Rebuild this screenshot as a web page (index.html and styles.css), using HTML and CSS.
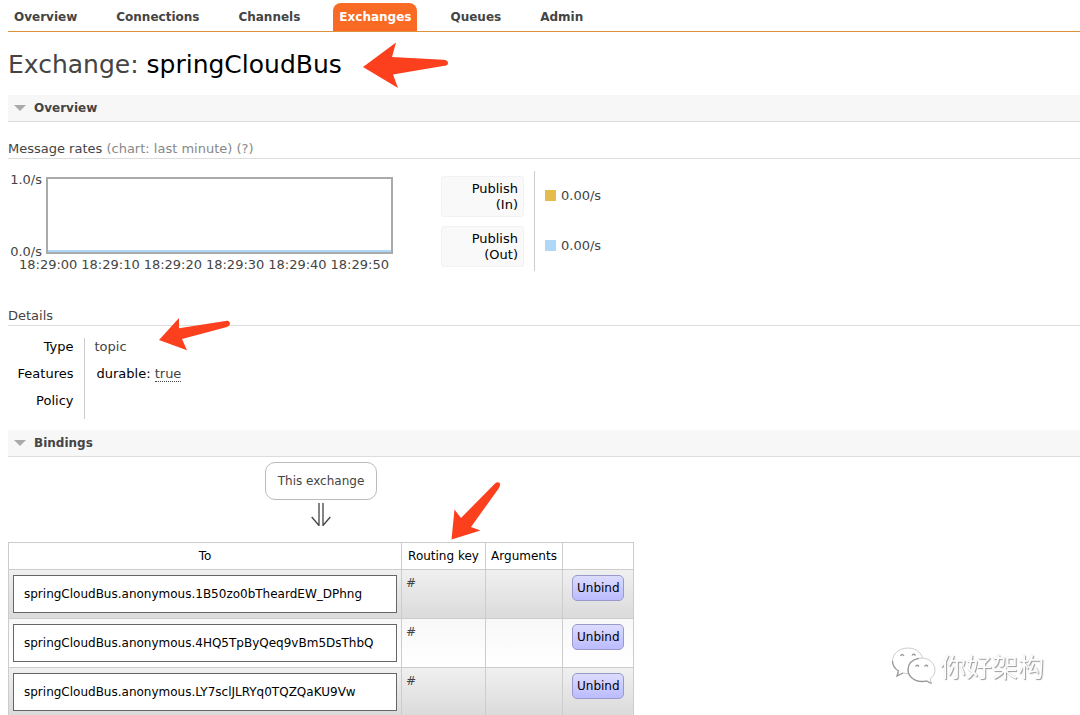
FILE: index.html
```html
<!DOCTYPE html>
<html lang="en">
<head>
<meta charset="utf-8">
<title>Exchange: springCloudBus</title>
<link rel="stylesheet" href="styles.css">
</head>
<body>
<nav class="tabs">
  <a class="tab" href="#overview">Overview</a>
  <a class="tab" href="#connections">Connections</a>
  <a class="tab" href="#channels">Channels</a>
  <a class="tab selected" href="#exchanges">Exchanges</a>
  <a class="tab" href="#queues">Queues</a>
  <a class="tab" href="#admin">Admin</a>
</nav>

<main>
  <h1 class="title">Exchange: <b>springCloudBus</b></h1>

  <section>
    <h2 class="section-head"><button type="button" aria-expanded="true"><span class="caret"></span>Overview</button></h2>
    <h3 class="sub-head">Message rates <button type="button">(chart: last minute)</button> <button type="button">(?)</button></h3>
    <div class="rates">
      <div class="chart">
        <div class="y-axis"><span>1.0/s</span><span>0.0/s</span></div>
        <div class="plot"></div>
        <div class="x-axis"><span>18:29:00</span><span>18:29:10</span><span>18:29:20</span><span>18:29:30</span><span>18:29:40</span><span>18:29:50</span></div>
      </div>
      <table class="legend">
        <tr><th scope="row"><button type="button">Publish<br>(In)</button></th><td><span class="swatch in"></span>0.00/s</td></tr>
        <tr><th scope="row"><button type="button">Publish<br>(Out)</button></th><td><span class="swatch out"></span>0.00/s</td></tr>
      </table>
    </div>

    <h3 class="sub-head">Details</h3>
    <table class="facts">
      <tr><th scope="row">Type</th><td>topic</td></tr>
      <tr><th scope="row">Features</th><td class="features">durable: <abbr>true</abbr></td></tr>
      <tr><th scope="row">Policy</th><td></td></tr>
    </table>
  </section>

  <section>
    <h2 class="section-head"><button type="button" aria-expanded="true"><span class="caret"></span>Bindings</button></h2>
    <div class="bindings">
      <span class="this-exchange">This exchange</span>
      <svg class="down" width="20" height="24" viewBox="0 0 20 24" fill="none" stroke="#444" stroke-width="1.3"><path d="M8 0V23M12 0V23M.7 14 8 22.500M19.300 14 12 22.500"/></svg>
      <table class="list">
        <colgroup><col class="to"><col class="key"><col class="args"><col class="act"></colgroup>
        <thead><tr><th>To</th><th>Routing key</th><th>Arguments</th><th></th></tr></thead>
        <tbody>
          <tr><td><a class="queue" href="#q1">springCloudBus.anonymous.1B50zo0bTheardEW_DPhng</a></td><td>#</td><td></td><td class="action"><button type="button">Unbind</button></td></tr>
          <tr><td><a class="queue" href="#q2">springCloudBus.anonymous.4HQ5TpByQeq9vBm5DsThbQ</a></td><td>#</td><td></td><td class="action"><button type="button">Unbind</button></td></tr>
          <tr><td><a class="queue" href="#q3">springCloudBus.anonymous.LY7sclJLRYq0TQZQaKU9Vw</a></td><td>#</td><td></td><td class="action"><button type="button">Unbind</button></td></tr>
        </tbody>
      </table>
    </div>
  </section>
</main>

<svg class="marks" width="520" height="560" viewBox="0 0 520 560" fill="#fc3f1d" aria-hidden="true">
  <path d="M363 67 396 42.500 392 57 443 59.700Q448 60 448 63T443 66L393 74.500 398 88Z"/>
  <path d="M159 340 179 318 179 328.300 227 320.800Q230 321 230 324 229.500 326 227 327L182 339 187 350.300Z"/>
  <path d="M451.500 539.500 454.500 509.500 461 518 495 483.500Q498 481 500 483.500 500.500 485 499 488L471 527 480.500 530.500Z"/>
</svg>

<div class="watermark" lang="zh">
  <svg width="46" height="38" viewBox="0 0 46 38" aria-hidden="true">
    <g fill="#fff" stroke="#ccc" stroke-width="1">
      <path d="M17 1C8 1 1.500 7 1.500 14c0 4 2 7.500 6 10l-1.500 5 6-3c1.500.5 3 .5 5 .5 9 0 15-6 15-12.500S26 1 17 1Z"/>
      <path d="M31 11C23 11 17 16.500 17 23s6 11.500 14 11.500c1.500 0 3 0 4.500-.5l5 2.500-1.500-4.500c3-2 5-5 5-9C44 16.500 38 11 31 11Z"/>
    </g>
    <path fill="none" stroke="#999" stroke-width="1.300" d="M1.500 14c0 4 2 7.500 6 10l-1.500 5 6-3M28 11.300C21 12.500 17 17 17 23s6 11.500 14 11.500c1.500 0 3 0 4.500-.5l5 2.500M9.500 9q1.500-3 3.500 0M21 8.500q1.500-2.500 3.500 0M24.500 19.500q1.500-2.500 3.500 0M33.500 19.500q1.500-2.500 3.500 0"/>
  </svg>
  <span>你好架构</span>
</div>
</body>
</html>
```
FILE: styles.css
```css
* { box-sizing: border-box; }

body {
  margin: 0;
  padding: 3px 0 0 8px;
  font: 13px/16px Verdana, "DejaVu Sans", sans-serif;
  color: #444;
  background: #fff;
  overflow: hidden;
}

button { font: inherit; color: inherit; margin: 0; padding: 0; border: 0; background: none; cursor: pointer; }
a { color: inherit; text-decoration: none; }

.tabs { display: flex; gap: 27px; font-size: 12px; border-bottom: 1px solid #e0913e; }
.tab { padding: 6px; font-weight: bold; border-radius: 8px 8px 0 0; }
.tab.selected { background: #f96a25; color: #fff; }

.title { margin: 0; padding: 17px 0 14px; font-size: 25px; line-height: 32px; font-weight: normal; }
.title b { font-weight: normal; color: #000; }

.section-head { margin: 0; font-size: 12px; line-height: 16px; background: #f7f7f7; border-bottom: 1px solid #ddd; }
.section-head button { display: flex; align-items: center; gap: 8px; width: 100%; padding: 5px 6px; text-align: left; }
.caret { border: 6px solid transparent; border-top-color: #aaa; border-bottom: 0; }

.sub-head { margin: 19px 0 0; padding-bottom: 1px; font-size: 13px; font-weight: normal; border-bottom: 1px solid #ddd; }
.sub-head button { color: #888; }

.rates { display: flex; align-items: flex-start; gap: 43px; padding-top: 12px; }
.chart { display: grid; grid-template-columns: 34px 347px; column-gap: 4px; padding-top: 6px; }
.y-axis { display: flex; flex-direction: column; justify-content: space-between; align-items: flex-end; margin: -5px 0 -6px; }
.plot { height: 77px; border: 2px solid #aaa; box-shadow: inset 0 -2px #afd8f8; }
.x-axis { grid-column: 1 / -1; display: flex; justify-content: space-between; padding: 3px 4px 0 11px; }

.legend { border-collapse: collapse; }
.legend th { padding: 5px 10px 4px 5px; font-weight: normal; border-right: 1px solid #ccc; }
.legend th button { display: block; width: 83px; padding: 4px 5px 3px; text-align: right; color: #000; background: #f9f9f9; border: 1px solid #f2f2f2; border-radius: 3px; }
.legend td { padding: 0 10px; }
.swatch { display: inline-block; width: 11px; height: 11px; margin-right: 5px; vertical-align: -1px; }
.swatch.in { background: #e5bb4c; }
.swatch.out { background: #afd8f8; }

.rates + .sub-head { margin-top: 35px; }

.facts { border-collapse: collapse; margin: 12px 0 11px; }
.facts th { width: 76px; height: 27px; padding: 0 10px 10px 0; font-weight: normal; text-align: right; color: #000; border-right: 1px solid #ccc; }
.facts td { padding: 0 10px 10px; }
.facts .features { padding-left: 12px; color: #000; }
.facts abbr { color: #444; border-bottom: 1px dotted #444; }

.bindings { display: inline-flex; flex-direction: column; align-items: center; padding-top: 5px; font-size: 12px; }
.this-exchange { padding: 10px 12px; border: 1px solid #bbb; border-radius: 10px; }
.down { margin: 3px 0 15px; }

.list { border-collapse: collapse; }
.list .to { width: 393px; }
.list .key { width: 84px; }
.list .args { width: 77px; }
.list .act { width: 71px; }
.list th, .list td { padding: 5px 4px; border: 1px solid #ccc; font-weight: normal; text-align: left; vertical-align: top; }
.list thead th { color: #000; text-align: center; }
.list tbody tr { background: linear-gradient(#f8f8f8, #fff); }
.list tbody tr:nth-child(odd) { background: linear-gradient(#f0f0f0, #dadada); }
.queue { display: block; padding: 10px; border: 1px solid #666; background: #fff; color: #000; }
.list .action { padding: 5px 9px; }
.action button { display: block; width: 52px; padding: 4px; border: 1px solid #99c; border-radius: 5px; color: #000; background: linear-gradient(#dcdcff, #bbf); }

/* Annotation arrows lie over the page */
.marks { position: absolute; top: 0; left: 0; pointer-events: none; }

.watermark { position: fixed; right: 36px; bottom: 30px; display: flex; align-items: center; gap: 3px; font: 26px/36px "Noto Sans CJK SC", sans-serif; color: #fff; text-shadow: 1px 1px 1px #999, 0 0 1px #ccc; }
```
